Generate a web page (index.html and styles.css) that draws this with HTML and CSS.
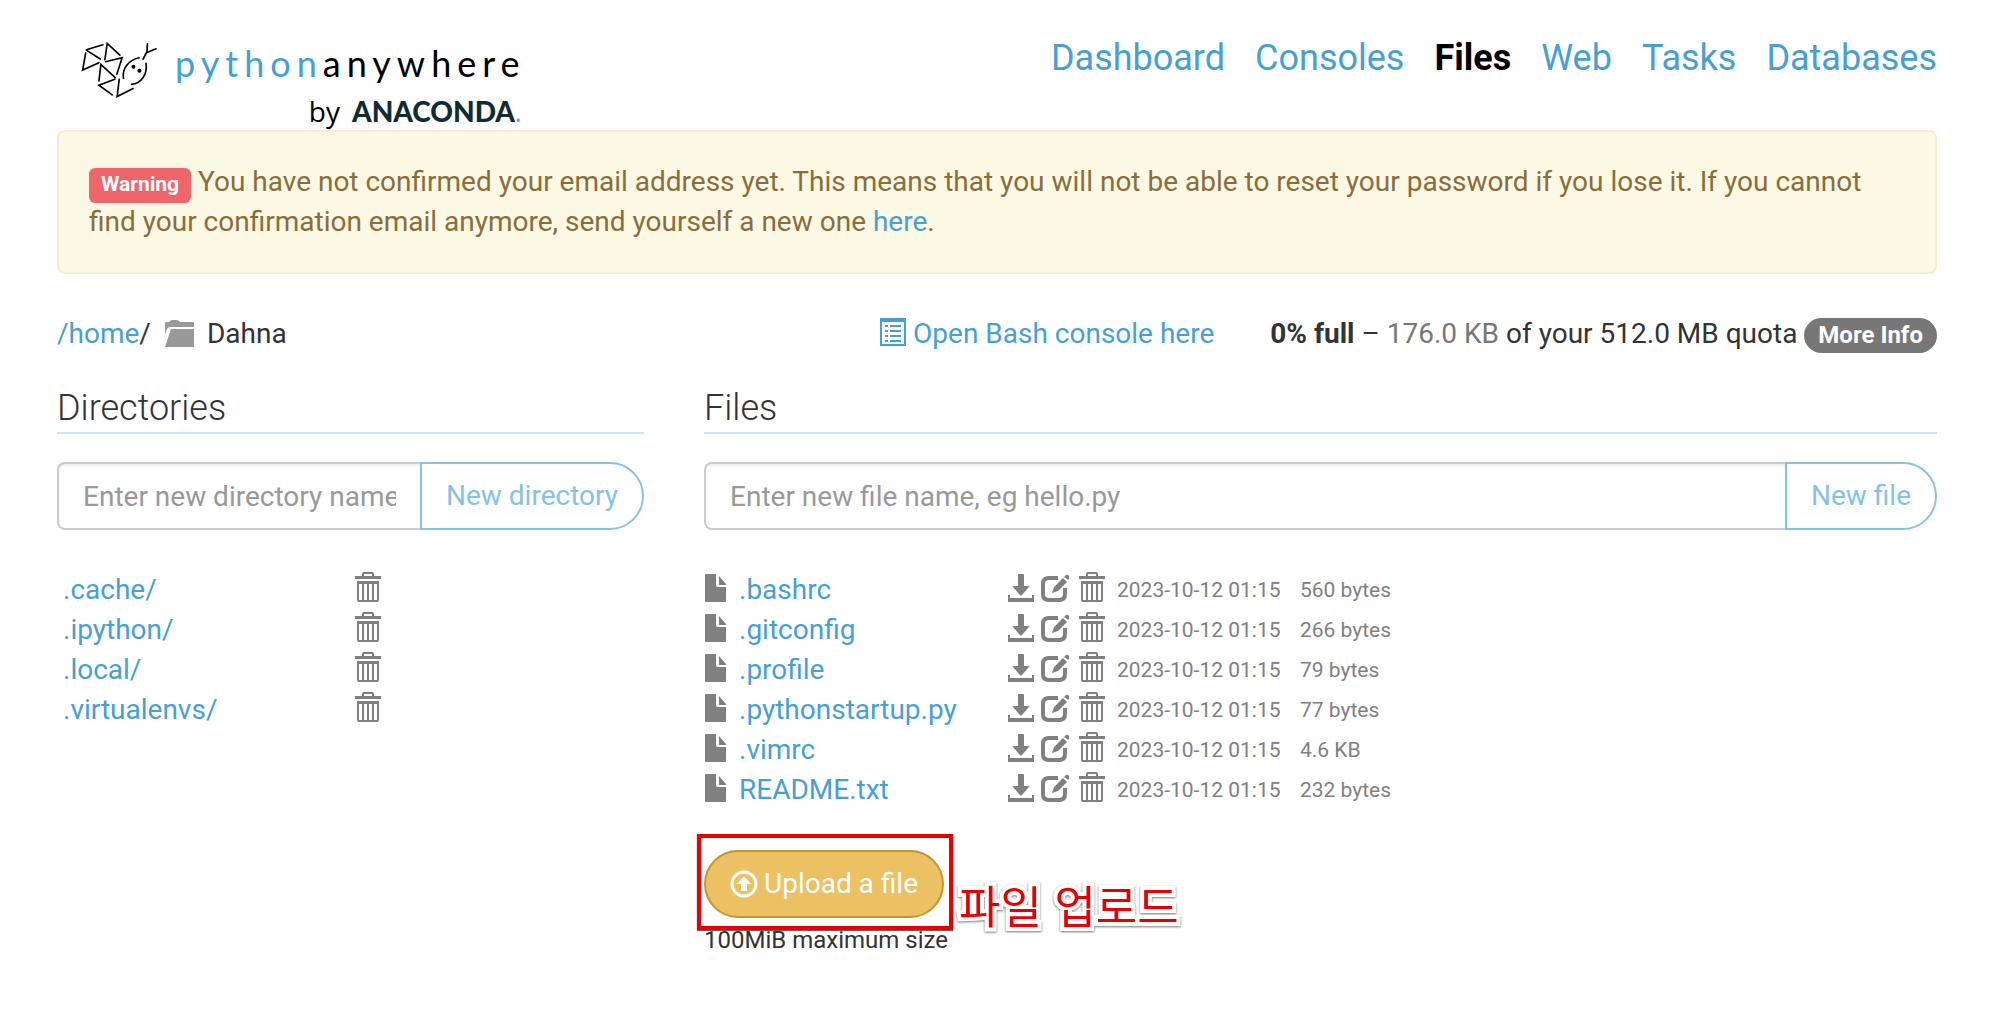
FILE: index.html
```html
<!DOCTYPE html>
<html lang="en">
<head>
<meta charset="utf-8">
<title>Files : PythonAnywhere</title>
<link rel="stylesheet" href="styles.css">
</head>
<body>
<svg class="sprite" aria-hidden="true">
  <symbol id="i-trash" viewBox="0 0 26 30"><path fill="none" stroke="currentColor" stroke-width="2" d="M8 5V2q0-1 1-1h8q1 0 1 1v3M3 10h20v18q0 1-1 1H4q-1 0-1-1zM8 10v19M13 10v19M18 10v19"/><path fill="currentColor" d="M0 4h26v3H0zM2 9h22v3H2z"/></symbol>
  <symbol id="i-file" viewBox="0 0 22 28"><path fill="currentColor" d="M1 0h10v11q0 2 2 2h8v14q0 1-1 1H1q-1 0-1-1V1q0-1 1-1zM14 2l7 8v1h-7z"/></symbol>
  <symbol id="i-download" viewBox="0 0 26 28"><path fill="currentColor" d="M11 0h4q1 0 1 1v11h4q2 0 1 1l-7 8q-1 1-2 0l-7-8q-1-1 1-1h4V1q0-1 1-1zM0 21h2v3h22v-3h2v7H0z"/></symbol>
  <symbol id="i-edit" viewBox="0 0 28 28"><path fill="none" stroke="currentColor" stroke-width="4" d="M17 4H8Q2 4 2 10v10q0 6 6 6h10q6 0 6-6v-6"/><path fill="currentColor" d="M11 19l2-6L22 4l4 4-9 9zM23 3l2-2q1-1 2 0l1 1v3l-1 1z"/></symbol>
  <symbol id="i-folder" viewBox="0 0 30 27"><path fill="currentColor" d="M0 15V3q0-1 1-1h3l1-1q1-1 2-1h5q1 0 2 1l1 1h13q1 0 1 1v4H5q-2 0-3 2zM6 9h23v18H0z"/></symbol>
  <symbol id="i-list" viewBox="0 0 26 28"><path fill="currentColor" fill-rule="evenodd" d="M0 0h26v28H0zM2 4v22h22V4z"/><path fill="currentColor" d="M5 7h3v2H5zM5 12h3v2H5zM5 17h3v2H5zM5 22h3v2H5zM10 7h11v2H10zM10 12h11v2H10zM10 17h11v2H10zM10 22h11v2H10z"/></symbol>
  <symbol id="i-upload" viewBox="0 0 28 28"><circle cx="14" cy="14" r="12" fill="none" stroke="currentColor" stroke-width="3"/><path fill="currentColor" d="M14 6l7 8h-4v7h-6v-7H7z"/></symbol>
</svg>

<header class="header">
  <a class="logo" href="#" aria-label="PythonAnywhere by Anaconda">
    <svg class="snake" viewBox="18 20 232 174" aria-hidden="true"><g fill="none" stroke="#000" stroke-width="5" stroke-linecap="round"><path d="M34 46L84 31M32 56L23 107L72 85M34 47L76 74M90 76L97 27L135 62M92 82L142 70L126 120M72 140L78 90L121 130M120 135L72 153L112 182M133 135L127 187L175 163"/><path d="M193 70C160 77 141 104 146 132M214 87C219 120 199 148 170 150M218 28L217 51L205 74M217 54L244 43"/></g><circle cx="176" cy="97" r="6"/><circle cx="194" cy="109" r="6"/></svg>
    <span class="wordmark"><span class="brand"><span class="brand-blue">python</span>anywhere</span><span class="owner"><span class="by">by</span><strong>ANACONDA</strong><span class="dot">.</span></span></span>
  </a>
  <nav class="nav">
    <a href="#">Dashboard</a>
    <a href="#">Consoles</a>
    <a href="#" class="active" aria-current="page">Files</a>
    <a href="#">Web</a>
    <a href="#">Tasks</a>
    <a href="#">Databases</a>
  </nav>
</header>

<main>
  <div class="alert" role="alert"><span class="label">Warning</span> You have not confirmed your email address yet. This means that you will not be able to reset your password if you lose it. If you cannot find your confirmation email anymore, send yourself a new one <a href="#">here</a>.</div>

  <div class="location">
    <div class="crumbs"><span><a href="#">/home</a>/</span><svg class="folder"><use href="#i-folder"/></svg><span>Dahna</span></div>
    <div class="status">
      <a class="console" href="#"><svg class="list"><use href="#i-list"/></svg>Open Bash console here</a>
      <span><b>0% full</b> – <span class="muted">176.0 KB</span> of your 512.0 MB quota <a class="badge" href="#">More Info</a></span>
    </div>
  </div>

  <div class="columns">
    <section>
      <h2>Directories</h2>
      <form class="create"><input type="text" aria-label="New directory name" placeholder="Enter new directory name"><button type="button">New directory</button></form>
      <table class="dirs">
        <tr><td><a href="#">.cache/</a></td><td><button class="icon" type="button" aria-label="Delete"><svg class="trash"><use href="#i-trash"/></svg></button></td></tr>
        <tr><td><a href="#">.ipython/</a></td><td><button class="icon" type="button" aria-label="Delete"><svg class="trash"><use href="#i-trash"/></svg></button></td></tr>
        <tr><td><a href="#">.local/</a></td><td><button class="icon" type="button" aria-label="Delete"><svg class="trash"><use href="#i-trash"/></svg></button></td></tr>
        <tr><td><a href="#">.virtualenvs/</a></td><td><button class="icon" type="button" aria-label="Delete"><svg class="trash"><use href="#i-trash"/></svg></button></td></tr>
      </table>
    </section>
    <section>
      <h2>Files</h2>
      <form class="create"><input type="text" aria-label="New file name" placeholder="Enter new file name, eg hello.py"><button type="button">New file</button></form>
      <table class="files">
        <tr><td><div class="name"><svg class="file"><use href="#i-file"/></svg><a href="#">.bashrc</a></div></td><td><div class="actions"><a href="#" aria-label="Download"><svg class="down"><use href="#i-download"/></svg></a><a href="#" aria-label="Edit"><svg class="edit"><use href="#i-edit"/></svg></a><button class="icon" type="button" aria-label="Delete"><svg class="trash"><use href="#i-trash"/></svg></button></div></td><td class="date">2023-10-12 01:15</td><td class="size">560 bytes</td></tr>
        <tr><td><div class="name"><svg class="file"><use href="#i-file"/></svg><a href="#">.gitconfig</a></div></td><td><div class="actions"><a href="#" aria-label="Download"><svg class="down"><use href="#i-download"/></svg></a><a href="#" aria-label="Edit"><svg class="edit"><use href="#i-edit"/></svg></a><button class="icon" type="button" aria-label="Delete"><svg class="trash"><use href="#i-trash"/></svg></button></div></td><td class="date">2023-10-12 01:15</td><td class="size">266 bytes</td></tr>
        <tr><td><div class="name"><svg class="file"><use href="#i-file"/></svg><a href="#">.profile</a></div></td><td><div class="actions"><a href="#" aria-label="Download"><svg class="down"><use href="#i-download"/></svg></a><a href="#" aria-label="Edit"><svg class="edit"><use href="#i-edit"/></svg></a><button class="icon" type="button" aria-label="Delete"><svg class="trash"><use href="#i-trash"/></svg></button></div></td><td class="date">2023-10-12 01:15</td><td class="size">79 bytes</td></tr>
        <tr><td><div class="name"><svg class="file"><use href="#i-file"/></svg><a href="#">.pythonstartup.py</a></div></td><td><div class="actions"><a href="#" aria-label="Download"><svg class="down"><use href="#i-download"/></svg></a><a href="#" aria-label="Edit"><svg class="edit"><use href="#i-edit"/></svg></a><button class="icon" type="button" aria-label="Delete"><svg class="trash"><use href="#i-trash"/></svg></button></div></td><td class="date">2023-10-12 01:15</td><td class="size">77 bytes</td></tr>
        <tr><td><div class="name"><svg class="file"><use href="#i-file"/></svg><a href="#">.vimrc</a></div></td><td><div class="actions"><a href="#" aria-label="Download"><svg class="down"><use href="#i-download"/></svg></a><a href="#" aria-label="Edit"><svg class="edit"><use href="#i-edit"/></svg></a><button class="icon" type="button" aria-label="Delete"><svg class="trash"><use href="#i-trash"/></svg></button></div></td><td class="date">2023-10-12 01:15</td><td class="size">4.6 KB</td></tr>
        <tr><td><div class="name"><svg class="file"><use href="#i-file"/></svg><a href="#">README.txt</a></div></td><td><div class="actions"><a href="#" aria-label="Download"><svg class="down"><use href="#i-download"/></svg></a><a href="#" aria-label="Edit"><svg class="edit"><use href="#i-edit"/></svg></a><button class="icon" type="button" aria-label="Delete"><svg class="trash"><use href="#i-trash"/></svg></button></div></td><td class="date">2023-10-12 01:15</td><td class="size">232 bytes</td></tr>
      </table>
      <div class="upload">
        <button class="upload-button" type="button"><svg class="up"><use href="#i-upload"/></svg>Upload a file</button>
        <small>100MiB maximum size</small>
        <div class="marker"></div>
        <div class="note" lang="ko">파일 업로드</div>
      </div>
    </section>
  </div>
</main>
</body>
</html>
```
FILE: styles.css
```css
* { box-sizing: border-box; }
body {
  margin: 0;
  padding: 0 61px 40px 57px;
  background: #fff;
  color: #333;
  font-family: Roboto, "Liberation Sans", sans-serif;
  font-size: 28px;
  line-height: 40px;
}
a { color: #479fd3; text-decoration: none; }
svg { display: block; flex: none; }
.sprite { position: absolute; width: 0; height: 0; }

/* header */
.header { display: flex; justify-content: space-between; height: 130px; }
.logo { display: flex; align-items: flex-start; gap: 17px; padding: 41px 0 0 24px; color: #000; }
.snake { width: 77px; height: 58px; }
.wordmark { display: flex; flex-direction: column; }
.brand { font-family: Lato, sans-serif; font-weight: 400; font-size: 36px; line-height: 44px; letter-spacing: 6px; }
.brand-blue { color: #479fd3; }
.owner { display: flex; justify-content: flex-end; padding-top: 6px; margin-right: 4px; font-size: 28px; line-height: 40px; font-family: Lato, sans-serif; color: #112b33; }
.owner strong { font-weight: 900; }
.by { font-family: "Open Sans", sans-serif; margin-right: 12px; color: #000; }
.dot { color: #9aa5a9; }
.nav { display: flex; gap: 30px; padding-top: 32px; font-size: 36px; line-height: 52px; }
.nav .active { color: #000; font-weight: 700; }

/* unconfirmed email message */
.alert { padding: 30px; border: 2px solid #faebcc; border-radius: 8px; background: #fbf8e4; color: #8a6d3b; }
.label { padding: 4px 12px 7px; border-radius: 6px; background: #ee656a; color: #fff; font-size: 21px; font-weight: 700; line-height: 24px; }

/* current directory, console link and quota */
.location { display: flex; justify-content: space-between; margin: 40px 0 32px; }
.crumbs, .status, .console { display: flex; }
.crumbs > .folder { width: 30px; height: 27px; margin: 6px 12px 0 14px; color: #999; }
.status { gap: 56px; }
.list { width: 26px; height: 28px; margin: 4px 7px 0 0; }
.muted { color: #777; }
.badge { padding: 3px 14px 4px; border-radius: 20px; background: #777; color: #fff; font-size: 24px; font-weight: 700; line-height: 28px; }

/* listings */
.columns { display: grid; grid-template-columns: 587fr 1233fr; gap: 60px; }
h2 { margin: 0 0 28px; padding-bottom: 2px; border-bottom: 2px solid #c5e8fa; font-size: 36px; line-height: 44px; font-weight: 300; }
.create { display: flex; margin-bottom: 40px; }
.create input, .create button { height: 68px; font: inherit; background: #fff; }
.create input { flex: 1; min-width: 0; padding: 0 24px; border: 2px solid #ccc; border-right: 0; border-radius: 8px 0 0 8px; box-shadow: inset 0 2px 2px #0001; color: #555; }
.create input::placeholder { color: #999; opacity: 1; }
.create button { padding: 0 24px; border: 2px solid #86c1e6; border-radius: 0 34px 34px 0; color: #86c1e6; }
table { border-collapse: collapse; }
td { height: 40px; padding: 0; white-space: nowrap; }
.dirs td:first-child { width: 298px; padding-left: 6px; }
.icon { display: block; padding: 0; border: 0; background: none; color: #808080; }
.trash { width: 26px; height: 30px; margin-bottom: 6px; }
.name { display: flex; gap: 12px; width: 304px; }
.file { width: 22px; height: 28px; margin: 4px 0 0 1px; color: #808080; }
.actions a, .actions { color: #808080; }
.actions { display: flex; gap: 7px; width: 109px; }
.actions .trash { margin-left: 3px; }
.down { width: 26px; height: 28px; margin-top: 2px; }
.edit { width: 28px; height: 28px; margin-top: 2px; }
.date, .size { font-size: 21px; color: #808080; }
.date { width: 183px; }

/* upload */
.upload { position: relative; display: flex; flex-direction: column; align-items: flex-start; margin-top: 40px; }
.upload-button { display: flex; align-items: center; gap: 6px; height: 68px; padding: 0 24px; border: 2px solid #c6952f; border-radius: 34px; background: #ebc163; color: #fff; font: inherit; }
.up { width: 28px; height: 28px; }
.upload small { font-size: 24px; line-height: 44px; }
.marker { position: absolute; left: -7px; top: -16px; width: 256px; height: 96px; border: 4px solid #e60000; box-shadow: 0 1px 1px #666; }
.note { position: absolute; left: 255px; top: 27px; font-family: "Noto Sans CJK KR", sans-serif; font-size: 45px; line-height: 56px; color: #e60000; white-space: nowrap; paint-order: stroke fill; -webkit-text-stroke: 8px #fff; filter: drop-shadow(0 1px 1px #777); }
```
